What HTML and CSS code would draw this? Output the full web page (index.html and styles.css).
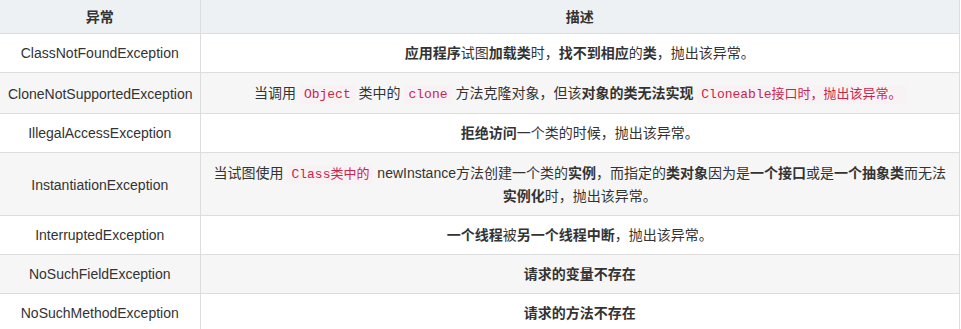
FILE: index.html
```html
<!DOCTYPE html>
<html lang="zh">
<head>
<meta charset="utf-8">
<link rel="stylesheet" href="styles.css">
</head>
<body>
<table class="ex-table">
  <colgroup><col class="c1"><col class="c2"></colgroup>
  <thead>
    <tr><th>异常</th><th>描述</th></tr>
  </thead>
  <tbody>
    <tr><td>ClassNotFoundException</td><td><b>应用程序</b>试图<b>加载类</b>时，<b>找不到相应</b>的<b>类</b>，抛出该异常。</td></tr>
    <tr class="tall"><td>CloneNotSupportedException</td><td>当调用 <code>Object</code> 类中的 <code>clone</code> 方法克隆对象，但该<b>对象的类无法实现</b> <code>Cloneable接口时，抛出该异常。</code></td></tr>
    <tr><td>IllegalAccessException</td><td><b>拒绝访问</b>一个类的时候，抛出该异常。</td></tr>
    <tr class="tall"><td>InstantiationException</td><td>当试图使用 <code>Class类中的</code> newInstance方法创建一个类的<b>实例</b>，而指定的<b>类对象</b>因为是<b>一个接口</b>或是<b>一个抽象类</b>而无法<b>实例化</b>时，抛出该异常。</td></tr>
    <tr><td>InterruptedException</td><td><b>一个线程</b>被<b>另一个线程中断</b>，抛出该异常。</td></tr>
    <tr><td>NoSuchFieldException</td><td><b>请求的变量不存在</b></td></tr>
    <tr><td>NoSuchMethodException</td><td><b>请求的方法不存在</b></td></tr>
  </tbody>
</table>
</body>
</html>
```
FILE: styles.css
```css
html, body {
  margin: 0;
  padding: 0;
  background: #fff;
}
.ex-table {
  border-collapse: collapse;
  table-layout: fixed;
  width: 960px;
  font-family: "Liberation Sans", "Noto Sans CJK SC", sans-serif;
  font-size: 14px;
  line-height: 22px;
  color: #333;
}
.ex-table .c1 { width: 200px; }
.ex-table th,
.ex-table td {
  border: 1px solid #dddddd;
  text-align: center;
  vertical-align: middle;
}
.ex-table th {
  background: #eef1f4;
  font-weight: bold;
  padding: 6px 8px 5px;
  border-top: none;
}
.ex-table td {
  padding: 8px 8px;
}
.ex-table tr.tall td {
  padding: 9px 8px 8px;
}
.ex-table th:first-child,
.ex-table td:first-child {
  border-left: none;
}
.ex-table tbody tr:nth-child(even) td {
  background: #f6f6f6;
}
.ex-table b {
  font-weight: bold;
}
.ex-table code {
  font-family: "Liberation Mono", "Noto Sans CJK SC", monospace;
  font-size: 13px;
  line-height: 20px;
  color: #c7254e;
  background: #f9f2f4;
  padding: 2px 4px;
  border-radius: 3px;
}
```
